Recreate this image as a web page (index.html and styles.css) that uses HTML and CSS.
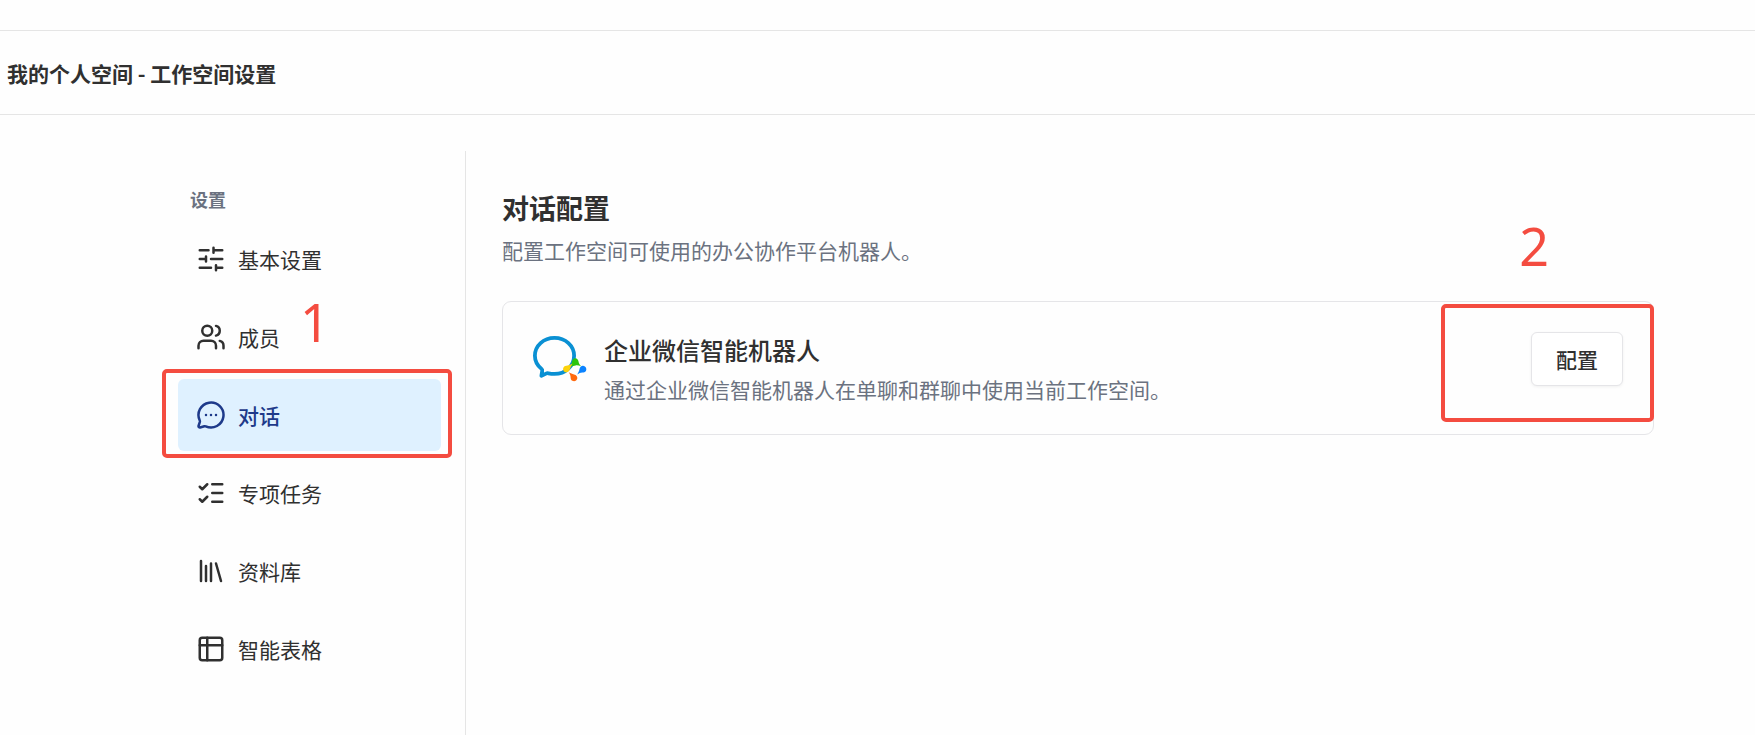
FILE: index.html
```html
<!DOCTYPE html>
<html lang="zh-CN">
<head>
<meta charset="utf-8">
<meta name="viewport" content="width=device-width, initial-scale=1">
<title>工作空间设置</title>
<link rel="stylesheet" href="styles.css">
</head>
<body>
<header class="topbar">
  <h1 class="topbar-title">我的个人空间 - 工作空间设置</h1>
</header>
<div class="layout">
  <aside class="sidebar">
    <h2 class="sidebar-label">设置</h2>
    <nav class="nav">
      <a class="nav-item" href="#basic">
        <svg class="icon" viewBox="0 0 24 24" aria-hidden="true"><path d="M10 5H3M12 19H3M14 3v4M16 17v4M21 12h-9M21 19h-5M21 5h-7M8 10v4M8 12H3"/></svg>
        <span>基本设置</span>
      </a>
      <a class="nav-item" href="#members">
        <svg class="icon" viewBox="0 0 24 24" aria-hidden="true"><path d="M16 21v-2a4 4 0 0 0-4-4H6a4 4 0 0 0-4 4v2"/><circle cx="9" cy="7" r="4"/><path d="M22 21v-2a4 4 0 0 0-3-3.87M16 3.128a4 4 0 0 1 0 7.744"/></svg>
        <span>成员</span>
      </a>
      <div class="marked">
        <a class="nav-item nav-item-active" href="#chat" aria-current="page">
          <svg class="icon" viewBox="0 0 24 24" aria-hidden="true"><path d="M2.992 16.342a2 2 0 0 1 .094 1.167l-1.065 3.29a1 1 0 0 0 1.236 1.168l3.413-.998a2 2 0 0 1 1.099.092 10 10 0 1 0-4.777-4.719"/><path d="M8 12h.01M12 12h.01M16 12h.01"/></svg>
          <span>对话</span>
        </a>
        <div class="mark mark-nav"></div>
        <span class="step step-nav">1</span>
      </div>
      <a class="nav-item" href="#tasks">
        <svg class="icon" viewBox="0 0 24 24" aria-hidden="true"><path d="M13 5h8M13 12h8M13 19h8M3 17l2 2 4-4M3 7l2 2 4-4"/></svg>
        <span>专项任务</span>
      </a>
      <a class="nav-item" href="#library">
        <svg class="icon" viewBox="0 0 24 24" aria-hidden="true"><path d="M16 6l4 14M12 6v14M8 8v12M4 4v16"/></svg>
        <span>资料库</span>
      </a>
      <a class="nav-item" href="#tables">
        <svg class="icon" viewBox="0 0 24 24" aria-hidden="true"><rect x="3" y="3" width="18" height="18" rx="2"/><path d="M9 3v18M3 9h18"/></svg>
        <span>智能表格</span>
      </a>
    </nav>
  </aside>
  <main class="content">
    <h2 class="content-title">对话配置</h2>
    <p class="content-desc">配置工作空间可使用的办公协作平台机器人。</p>
    <section class="card">
      <svg class="logo" viewBox="0 0 54 54" aria-hidden="true">
        <path d="M22.500 5.900C11.500 5.900 2.900 13.700 2.900 23.700c0 5.300 2.300 9.600 6.600 13.200.7.600.9 1.300.7 2.200l-.8 4.800 4.600-2.300c.8-.4 1.500-.5 2.400-.3 2 .4 4 .6 6.100.6 11 0 19.600-8.200 19.600-18.200S33.500 5.900 22.500 5.900z" fill="none" stroke="#0a90d3" stroke-width="3.800" stroke-linejoin="round"/>
        <path d="M38.800 34.600l1-4.200c.4-2.200 1.400-4.200 3.400-4.200 1.900 0 3 1.500 3.300 3.300.3 1.900 1.100 3.200 2.500 4.700-2-.6-3.800-1.200-5.400-.7z" fill="#2bc40c"/>
        <path d="M40.500 31.500c-.9 2-2 3.600-2.500 5.600-.5 2.100-2 3.500-4 3.200-2.400-.4-3.600-2.800-2.500-4.900.8-1.600 2.300-1.900 4-2 1.800-.1 3.300-.8 5-1.900z" fill="#fcd20a"/>
        <path d="M36.800 40.200c2 .9 3.300 1.900 5.300 2.200 2.200.3 3.600 2.100 3.200 4.200-.5 2.300-3 3.400-5 2.200-1.300-.8-1.700-2-1.700-3.600 0-1.900-.8-3.300-1.800-5z" fill="#ff6a10"/>
        <path d="M45.300 42.500c1-2 1.900-3.400 2.200-5.400.4-2.300 2.100-3.700 4.200-3.200 2.300.5 3.300 3 2.200 5-.8 1.300-2 1.700-3.600 1.700-1.900 0-3.300.8-5 1.900z" fill="#0b83ff"/>
      </svg>
      <div class="card-text">
        <h3 class="card-title">企业微信智能机器人</h3>
        <p class="card-desc">通过企业微信智能机器人在单聊和群聊中使用当前工作空间。</p>
      </div>
      <button class="button" type="button">配置</button>
      <div class="mark mark-card"></div>
      <span class="step step-card">2</span>
    </section>
  </main>
</div>
</body>
</html>
```
FILE: styles.css
```css
* {
  box-sizing: border-box;
}

body {
  margin: 0;
  min-height: 100vh;
  display: flex;
  flex-direction: column;
  padding-top: 30px;
  background: #fefefe;
  color: #303030;
  font-family: "Noto Sans CJK SC", "Noto Sans", sans-serif;
  font-size: 21px;
  line-height: 30px;
}

h1, h2, h3, p {
  margin: 0;
}

.topbar {
  padding: 27px 7px 26px;
  border-top: 1px solid #e5e5e5;
  border-bottom: 1px solid #e5e5e5;
}

.topbar-title {
  font-size: 21px;
  line-height: 30px;
  font-weight: 700;
}

.layout {
  flex: 1;
  display: flex;
  padding: 36px 101px 0 154px;
}

.sidebar {
  flex: 0 0 312px;
  padding: 36px 24px;
  border-right: 1px solid #e5e5e5;
}

.sidebar-label {
  padding-left: 12px;
  margin-bottom: 12px;
  color: #6b7280;
  font-size: 18px;
  line-height: 24px;
  font-weight: 700;
}

.nav {
  display: flex;
  flex-direction: column;
  gap: 6px;
}

.nav-item {
  display: flex;
  align-items: center;
  gap: 12px;
  height: 72px;
  padding: 0 18px;
  border-radius: 6px;
  color: inherit;
  text-decoration: none;
}

.nav-item-active {
  background: #dff1ff;
  color: #1e3a8a;
  font-weight: 500;
}

.icon {
  flex: none;
  width: 30px;
  height: 30px;
  fill: none;
  stroke: currentColor;
  stroke-width: 2;
  stroke-linecap: round;
  stroke-linejoin: round;
}

.content {
  flex: 1;
  min-width: 0;
  padding: 36px 0 36px 36px;
}

.content-title {
  margin-bottom: 6px;
  font-size: 27px;
  line-height: 42px;
  font-weight: 700;
}

.content-desc,
.card-desc {
  color: #6b7280;
}

.card {
  position: relative;
  display: flex;
  align-items: flex-start;
  gap: 18px;
  margin-top: 36px;
  padding: 30px 30px 30px 29px;
  border: 1px solid #e5e5e8;
  border-radius: 9px;
}

.logo {
  flex: none;
  width: 54px;
  height: 54px;
  overflow: visible;
}

.card-text {
  flex: 1;
  min-width: 0;
}

.card-title {
  margin-bottom: 6px;
  font-size: 24px;
  line-height: 36px;
  font-weight: 500;
}

.button {
  flex: none;
  height: 54px;
  padding: 0 24px;
  border: 1px solid #e5e5e8;
  border-radius: 6px;
  background: #fff;
  box-shadow: 0 1px 3px rgba(0, 0, 0, 0.06);
  color: inherit;
  font: inherit;
  font-weight: 500;
}

/* Guide marks drawn over the page */
.marked {
  position: relative;
}

.mark {
  position: absolute;
  border: 4px solid #f44c40;
  border-radius: 5px;
  pointer-events: none;
}

.mark-nav {
  inset: -10px -11px -7px -16px;
}

.mark-card {
  top: 2px;
  right: -1px;
  bottom: 12px;
  width: 213px;
}

.step {
  position: absolute;
  color: #f44c40;
  font-family: "Noto Sans", sans-serif;
  font-size: 52px;
  line-height: 52px;
  pointer-events: none;
}

.step-nav {
  top: -83px;
  left: 122px;
}

.step-card {
  top: -82px;
  right: 104px;
}
```
